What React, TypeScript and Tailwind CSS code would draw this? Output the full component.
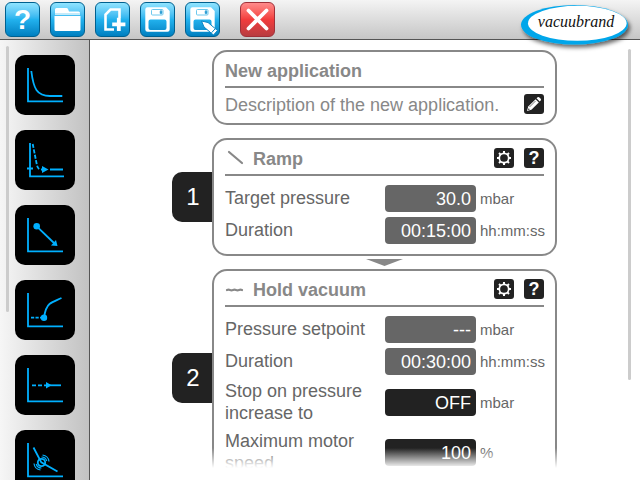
import { useId, useState } from 'react'
import type { ReactNode } from 'react'

const STEPS = [
  { id: 'evacuate', label: 'Evacuate' },
  { id: 'auto', label: 'Automatic' },
  { id: 'ramp', label: 'Ramp' },
  { id: 'vent', label: 'Vent' },
  { id: 'hold', label: 'Hold vacuum' },
  { id: 'manual', label: 'Manual' },
] as const

type StepId = typeof STEPS[number]['id']

export default function App() {
  return (
    <div
      className="flex h-screen flex-col overflow-hidden bg-white text-[18px] text-[#666]"
      style={{ fontFamily: '"Liberation Sans", Arial, sans-serif' }}
    >
      <Toolbar />

      <div className="flex min-h-0 flex-1">
        {/* Step palette */}
        <aside className="flex w-[90px] shrink-0 gap-[6px] overflow-hidden border-r border-[#555] bg-linear-to-r from-[#f6f6f6] to-[#c2c2c2] pl-[6px]">
          <div className="mt-[6px] h-[266px] w-[3px] shrink-0 rounded-full bg-[#ccc]" />
          <nav className="flex flex-col gap-[15px] pt-[15px]">
            {STEPS.map((s) => (
              <button key={s.id} aria-label={s.label} className="size-[60px] shrink-0 rounded-[10px] bg-black">
                <StepIcon id={s.id} />
              </button>
            ))}
          </nav>
        </aside>

        {/* Program */}
        <main className="flex min-w-0 flex-1 pr-[9px] pb-3">
          <div className="relative min-w-0 flex-1 overflow-hidden pt-[10px] pl-[11px]">
            <div className="mx-auto w-full max-w-[385px]">
              <div className="pl-10">
                <Card title="New application">
                  <div className="flex items-start justify-between pt-[6px] pb-[7px]">
                    <p className="leading-[22px] text-[#888]">Description of the new application.</p>
                    <SmallButton label="Edit description">
                      <PencilIcon />
                    </SmallButton>
                  </div>
                </Card>
              </div>

              <div className="h-[13px]" />

              <Step number={1}>
                <Card title="Ramp" icon={<path d="M4 4 17 15" />} tools>
                  <Fields>
                    <Field label="Target pressure" value="30.0" unit="mbar" />
                    <Field label="Duration" value="00:15:00" unit="hh:mm:ss" />
                  </Fields>
                </Card>
              </Step>

              <div className="flex h-[13px] justify-center pt-[3px] pl-10">
                <svg width="37" height="7" viewBox="0 0 37 7">
                  <path d="M0 0h37L18.500 7z" fill="#888" />
                </svg>
              </div>

              <Step number={2}>
                <Card title="Hold vacuum" icon={<path d="M2 11q1.500-.6 3 0t3 0 3 0 3 0 3 0" />} tools>
                  <Fields>
                    <Field label="Pressure setpoint" value="---" unit="mbar" />
                    <Field label="Duration" value="00:30:00" unit="hh:mm:ss" />
                    <Field label="Stop on pressure increase to" value="OFF" unit="mbar" dark />
                    <Field label="Maximum motor speed" value="100" unit="%" dark />
                  </Fields>
                </Card>
              </Step>
            </div>

            {/* Fade out at the lower edge */}
            <div className="pointer-events-none absolute inset-x-0 bottom-0 h-5 bg-linear-to-b from-transparent to-white" />
          </div>
          <div className="mt-[9px] h-[331px] w-[3px] shrink-0 rounded-full bg-[#ccc]" />
        </main>
      </div>
    </div>
  )
}

function Toolbar() {
  return (
    <header className="relative flex h-10 shrink-0 items-start gap-[10px] border-b border-[#555] bg-linear-to-b from-[#f4f4f4] to-[#c6c6c6] px-[5px] pt-[2px]">
      <ToolButton label="Help">
        <span className="text-[28px] leading-[33px] font-bold text-white">?</span>
      </ToolButton>
      <ToolButton label="Open">
        <svg width="33" height="33" viewBox="1 1 33 33">
          <path d="M5 11V7.500q0-1.500 1.500-1.500h10q1 0 1.500 1l1 2.500H28.500q1.500 0 1.500 1.500z" fill="#fff" />
          <path d="M5 11h25v2H5z" fill="#c4ebfa" />
          <path d="M4.500 14h26v13.500q0 1.500-1.500 1.500H6q-1.500 0-1.500-1.500z" fill="#fff" />
        </svg>
      </ToolButton>
      <ToolButton label="New">
        <svg width="33" height="33" viewBox="1 1 33 33" fill="none" stroke="#fff">
          <path d="M24.500 16V7.500H15.500L10.500 12.500V27.500H19" strokeWidth="2.600" />
          <path d="M23.800 15.800v13.200M17.200 22.300h13.200" strokeWidth="3.800" />
        </svg>
      </ToolButton>
      <ToolButton label="Save">
        <svg width="33" height="33" viewBox="1 1 33 33">
          <Floppy />
        </svg>
      </ToolButton>
      <ToolButton label="Save as">
        <svg width="33" height="33" viewBox="1 1 33 33">
          <Floppy />
          <g stroke="#0a86c4" strokeWidth="1" fill="#fff">
            <path d="M16.500 19 23 20.500 32.500 28.500 28.500 33 19 25z" />
            <path d="M26.500 30.800 30.300 26.600" />
          </g>
        </svg>
      </ToolButton>
      <div className="ml-[10px]">
        <ToolButton label="Cancel" red>
          <svg width="33" height="33" viewBox="1 1 33 33">
            <path d="M8.500 8.500 26.500 26.500M26.500 8.500 8.500 26.500" stroke="#fff" strokeWidth="3.800" strokeLinecap="round" />
          </svg>
        </ToolButton>
      </div>

      {/* Logo hangs over the lower edge of the bar */}
      <svg className="absolute top-0 right-0 z-10" width="125" height="56" viewBox="0 0 125 56" role="img" aria-label="vacuubrand">
        <defs>
          <filter id="logo-shadow" x="-10%" y="-20%" width="130%" height="150%">
            <feDropShadow dx="2" dy="3" stdDeviation="2" floodColor="#000" floodOpacity="0.6" />
          </filter>
        </defs>
        <ellipse cx="59.500" cy="24.800" rx="53.500" ry="19.800" fill="#00a6ea" filter="url(#logo-shadow)" />
        <ellipse cx="62.300" cy="23.300" rx="49.300" ry="17.500" fill="#fff" />
        <text
          x="61"
          y="27"
          textAnchor="middle"
          fill="#111"
          fontSize="16"
          fontStyle="italic"
          fontFamily='"Liberation Serif", serif'
        >
          vacuubrand
        </text>
      </svg>
    </header>
  )
}

function ToolButton({ label, red, children }: { label: string; red?: boolean; children: ReactNode }) {
  return (
    <button
      aria-label={label}
      className={
        red
          ? 'flex size-[35px] shrink-0 items-center justify-center rounded-[6px] border border-[#a03038] bg-linear-to-b from-[#ff8a8a] via-[#f23c3c] to-[#b83c40]'
          : 'flex size-[35px] shrink-0 items-center justify-center rounded-[6px] border border-[#00608f] bg-linear-to-b from-[#8fe4ff] via-[#22b2ee] to-[#007fc0]'
      }
    >
      {children}
    </button>
  )
}

function Floppy() {
  return (
    <>
      <path
        fillRule="evenodd"
        d="M7.500 5.300H26L29.700 9V27.500q0 2.200-2.200 2.200H7.500q-2.200 0-2.200-2.200V7.500q0-2.200 2.200-2.200zM10.500 17.500q-2 0-2 2v6.500q0 2 2 2h14q2 0 2-2v-6.500q0-2-2-2z"
        fill="#fff"
      />
      <rect x="11.500" y="7.500" width="11.500" height="5.500" rx="1" fill="#fff" stroke="#6cc8ee" />
      <rect x="20" y="8.500" width="2" height="3.500" rx="1" fill="#2e9fd4" stroke="#2e9fd4" strokeWidth=".5" />
    </>
  )
}

function Step({ number, children }: { number: number; children: ReactNode }) {
  return (
    <section className="flex items-center">
      <div className="flex h-[50px] w-10 shrink-0 items-center justify-center rounded-l-[10px] bg-[#222] pl-[2px] text-[24px] text-white">
        {number}
      </div>
      <div className="min-w-0 flex-1">{children}</div>
    </section>
  )
}

function Card({ title, icon, tools, children }: { title: string; icon?: ReactNode; tools?: boolean; children: ReactNode }) {
  return (
    <div className="rounded-[15px] border-2 border-[#888] bg-white px-[11px]">
      <div className="flex h-9 items-center border-b-2 border-[#888] pt-[2px]">
        {icon && (
          <svg width="20" height="20" viewBox="0 0 20 20" className="mr-2" fill="none" stroke="#888" strokeWidth="2.200" strokeLinecap="round">
            {icon}
          </svg>
        )}
        <h2 className="flex-1 pt-[2px] leading-[22px] font-bold text-[#888]">{title}</h2>
        {tools && (
          <div className="flex gap-[10px]">
            <SmallButton label={`${title} settings`}>
              <GearIcon />
            </SmallButton>
            <SmallButton label={`${title} help`}>
              <span className="text-[18px] leading-[20px] font-bold text-white">?</span>
            </SmallButton>
          </div>
        )}
      </div>
      {children}
    </div>
  )
}

function SmallButton({ label, children }: { label: string; children: ReactNode }) {
  return (
    <button aria-label={label} className="flex size-5 shrink-0 items-center justify-center rounded-[3px] bg-[#222]">
      {children}
    </button>
  )
}

function Fields({ children }: { children: ReactNode }) {
  return <div className="flex flex-col gap-[5px] pt-[9px] pb-[10px]">{children}</div>
}

function Field({ label, value, unit, dark }: { label: string; value: string; unit: string; dark?: boolean }) {
  const id = useId()
  const [text, setText] = useState(value)
  return (
    <div className="grid grid-cols-[minmax(0,1fr)_91px_68px] items-center">
      <label htmlFor={id} className="pr-4 pb-px leading-[22px]">
        {label}
      </label>
      <input
        id={id}
        type="text"
        value={text}
        onChange={(e) => setText(e.target.value)}
        className={
          dark
            ? 'h-[27px] w-full rounded-[4px] bg-[#222] px-[5px] pt-[2px] text-right text-white'
            : 'h-[27px] w-full rounded-[4px] bg-[#666] px-[5px] pt-[2px] text-right text-white'
        }
      />
      <span className="pl-1 text-[15px] leading-[22px]">{unit}</span>
    </div>
  )
}

function PencilIcon() {
  return (
    <svg width="20" height="20" viewBox="0 0 20 20">
      <path d="M3 17 4.200 12.600 11.600 5.200 14.800 8.400 7.400 15.800z" fill="#fff" />
      <path d="M12.500 4.300 13.600 3.200q.9-.7 1.800.2l1.300 1.300q.8.900 0 1.800L15.700 7.500z" fill="#fff" />
      <path d="M5.500 13 11.500 7" stroke="#222" strokeWidth=".6" />
      <circle cx="4.800" cy="15.200" r=".7" fill="#222" />
    </svg>
  )
}

function GearIcon() {
  return (
    <svg width="20" height="20" viewBox="0 0 20 20" fill="none" stroke="#fff">
      <circle cx="10" cy="10" r="4.700" strokeWidth="1.700" />
      <path
        d="M10 5.200V3M10 17v-2.200M5.200 10H3M17 10h-2.200M6.600 6.600 5 5M15 15l-1.600-1.600M6.600 13.400 5 15M15 5l-1.600 1.600"
        strokeWidth="2"
      />
    </svg>
  )
}

function StepIcon({ id }: { id: StepId }) {
  return (
    <svg width="60" height="60" viewBox="0 0 60 60" fill="none" stroke="#00b0ff" strokeWidth="1.800">
      {id === 'auto' ? <path d="M15 13V46.300H49M12 38.500h6" /> : <path d="M13 13V46.300H48" />}
      {id === 'evacuate' && <path d="M16.300 16C18.500 34 22 41 35 41H47.300" />}
      {id === 'auto' && (
        <>
          <path d="M17.700 14 21.700 34Q22.500 39 25.500 39.500" strokeDasharray="4 1.500" />
          <path d="M26 39.500h3M35 39.500H48" />
          <path d="M27 36 33.500 39.500 27 43z" fill="#00b0ff" stroke="none" />
        </>
      )}
      {id === 'ramp' && (
        <>
          <path d="M21.700 21.300 39 38" />
          <circle cx="21.700" cy="21.300" r="3.300" fill="#00b0ff" stroke="none" />
          <path d="M42.500 41 36 40.500 41 35z" fill="#00b0ff" stroke="none" />
        </>
      )}
      {id === 'vent' && (
        <>
          <path d="M16 37.700H27" strokeDasharray="3.200 1.300" />
          <path d="M29 37.700C30 31 31.500 26.500 34.500 24S41 20.500 46.500 18" />
          <circle cx="29" cy="37.700" r="3.200" fill="#00b0ff" stroke="none" />
        </>
      )}
      {id === 'hold' && (
        <>
          <path d="M17 30.300H31" strokeDasharray="4 2" />
          <path d="M34 30.300H46" />
          <path d="M31 27 36.500 30.300 31 33.600z" fill="#00b0ff" stroke="none" />
        </>
      )}
      {id === 'manual' && (
        <>
          <path d="M18.500 17.500 26.300 32.300 42.500 41.500" />
          <circle cx="26.500" cy="32.500" r="3.700" />
          <path d="M26.500 27A5.500 5.500 0 0 1 31.800 31M26.500 38A5.500 5.500 0 0 1 21.200 34" strokeWidth="1.200" />
          <path d="M27.500 25A7.500 7.500 0 0 1 34 31.500M25.500 40A7.500 7.500 0 0 1 19 33.500" strokeWidth="1.200" />
        </>
      )}
    </svg>
  )
}
